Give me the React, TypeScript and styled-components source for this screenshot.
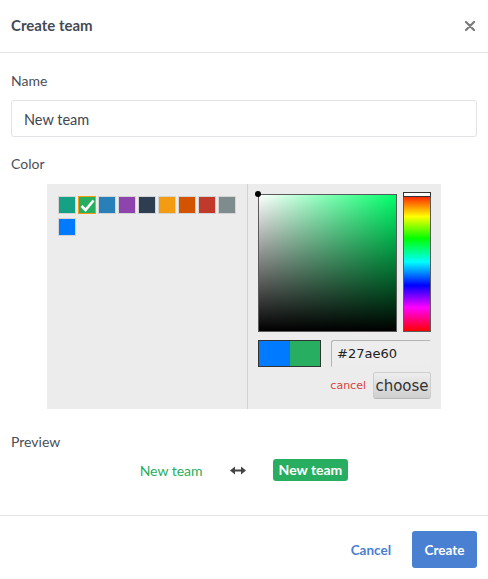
import React, { useState } from "react"
import styled, { createGlobalStyle } from "styled-components"

const GlobalStyle = createGlobalStyle`
  html, body {
    margin: 0;
    padding: 0;
    background: #fff;
  }
  body {
    font-family: Lato, "Liberation Sans", sans-serif;
    color: #4a4f57;
  }
  * {
    box-sizing: border-box;
  }
`

const Modal = styled.div`
  width: 488px;
  height: 579px;
  display: flex;
  flex-direction: column;
  background: #fff;
`

const Header = styled.div`
  height: 53px;
  padding: 0 12px 0 11px;
  display: flex;
  align-items: center;
  justify-content: space-between;
  border-bottom: 1px solid #e3e4ea;
`

const Title = styled.h1`
  margin: 0 0 2px;
  font-size: 15px;
  font-weight: 700;
  color: #444a54;
`

const CloseBtn = styled.button`
  border: none;
  background: transparent;
  padding: 0;
  width: 12px;
  height: 12px;
  display: flex;
  align-items: center;
  justify-content: center;
  cursor: pointer;
`

const Body = styled.div`
  flex: 1;
  padding: 18px 11px 0;
`

const Label = styled.div<{ $gap?: number }>`
  font-size: 14px;
  line-height: 20px;
  color: #4a4f57;
  margin-bottom: ${(p) => p.$gap ?? 9}px;
`

const Field = styled.div<{ $gap?: number }>`
  margin-bottom: ${(p) => p.$gap ?? 17}px;
`

const TextInput = styled.input`
  width: 100%;
  height: 37px;
  border: 1px solid #e1e3e8;
  border-radius: 3px;
  padding: 1px 12px 0;
  font-family: inherit;
  font-size: 14.5px;
  color: #3f4651;
  outline: none;
`

const Picker = styled.div`
  width: 394px;
  margin: 0 auto;
  display: flex;
  background: #ececec;
`

const Palette = styled.div`
  width: 201px;
  padding: 12px 10px 10px 11px;
  border-right: 1px solid #d2d2d2;
  display: flex;
  flex-wrap: wrap;
  align-content: flex-start;
  gap: 4px 2px;
`

const Swatch = styled.div<{ $color: string; $active?: boolean }>`
  width: 18px;
  height: 18px;
  background: ${(p) => p.$color};
  border: 1px solid ${(p) => (p.$active ? "#f39c12" : "#d4d4d4")};
  display: flex;
  align-items: center;
  justify-content: center;
`

const ColorArea = styled.div`
  flex: 1;
  padding: 10px;
  display: grid;
  grid-template-columns: 139px 28px;
  column-gap: 6px;
  align-content: start;
`

const SatBox = styled.div`
  position: relative;
  width: 139px;
  height: 138px;
  border: 1px solid #5a5a5a;
  background: linear-gradient(to top, #000, rgba(0, 0, 0, 0)),
    linear-gradient(to right, #fff, rgba(255, 255, 255, 0)), #00ff6a;
`

const SatDot = styled.div`
  position: absolute;
  left: -4px;
  top: -4px;
  width: 6px;
  height: 6px;
  border-radius: 50%;
  background: #000;
`

const HueBar = styled.div`
  position: relative;
  width: 28px;
  height: 140px;
  margin-top: -2px;
  border: 1px solid #5a5a5a;
  background: linear-gradient(
    to bottom,
    #ff0000 0%,
    #ffff00 17%,
    #00ff00 33%,
    #00ffff 50%,
    #0000ff 67%,
    #ff00ff 83%,
    #ff0000 100%
  );
`

const HueMarker = styled.div`
  position: absolute;
  left: -1px;
  right: -1px;
  top: -1px;
  height: 5px;
  background: #fff;
  border: 1px solid #333;
`

const ValueRow = styled.div`
  grid-column: 1 / span 2;
  display: flex;
  justify-content: space-between;
  margin-top: 8px;
`

const Compare = styled.div`
  width: 63px;
  height: 27px;
  display: flex;
  border: 1px solid #333;
`

const Half = styled.div<{ $color: string }>`
  flex: 1;
  background: ${(p) => p.$color};
`

const HexInput = styled.input`
  width: 100px;
  height: 27px;
  border: 1px solid #b4b4b4;
  border-right-color: #ececec;
  border-bottom-color: #ececec;
  border-radius: 3px 0 0 0;
  background: #ededed;
  padding: 0 5px;
  font-family: "DejaVu Sans", sans-serif;
  font-size: 13px;
  color: #222;
  outline: none;
`

const Actions = styled.div`
  grid-column: 1 / span 2;
  display: flex;
  justify-content: flex-end;
  align-items: center;
  gap: 7px;
  margin-top: 5px;
`

const CancelLink = styled.a`
  font-family: "DejaVu Sans", sans-serif;
  font-size: 11px;
  color: #d93f3f;
  cursor: pointer;
`

const ChooseBtn = styled.button`
  height: 27px;
  width: 58px;
  padding: 0;
  border: 1px solid #cdcdcd;
  border-bottom-color: #b8b8b8;
  border-radius: 3px;
  background: linear-gradient(to bottom, #eeeeee, #cfcfcf);
  font-family: "DejaVu Sans", sans-serif;
  font-size: 15px;
  color: #333;
  cursor: pointer;
`

const PreviewRow = styled.div`
  display: flex;
  justify-content: center;
  align-items: center;
  gap: 27px;
`

const PreviewText = styled.span`
  font-size: 14px;
  color: #27ae60;
`

const Badge = styled.span`
  background: #27ae60;
  color: #fff;
  font-weight: 700;
  font-size: 14px;
  line-height: 22px;
  padding: 0 6px;
  border-radius: 3px;
`

const Footer = styled.div`
  height: 64px;
  border-top: 1px solid #e3e4ea;
  display: flex;
  justify-content: flex-end;
  align-items: center;
  gap: 9px;
  padding: 4px 11px 0 0;
`

const FooterBtn = styled.button<{ $primary?: boolean }>`
  height: 37px;
  width: ${(p) => (p.$primary ? "65px" : "auto")};
  padding: 0 ${(p) => (p.$primary ? 0 : 12)}px;
  border: none;
  border-radius: 3px;
  font-family: inherit;
  font-weight: 700;
  font-size: 13.5px;
  background: ${(p) => (p.$primary ? "#4a80d1" : "transparent")};
  color: ${(p) => (p.$primary ? "#fff" : "#4a7fd0")};
  cursor: pointer;
`

const palette = [
  "#16a085",
  "#27ae60",
  "#2980b9",
  "#8e44ad",
  "#2c3e50",
  "#f39c12",
  "#d35400",
  "#c0392b",
  "#7f8c8d",
  "#007bff",
]

const App: React.FC = () => {
  const [name, setName] = useState("New team")
  const [color, setColor] = useState("#27ae60")

  return (
    <>
      <GlobalStyle />
      <Modal>
        <Header>
          <Title>Create team</Title>
          <CloseBtn aria-label="Close">
            <svg width="10" height="10" viewBox="0 0 10 10">
              <path
                d="M1 1 L9 9 M9 1 L1 9"
                stroke="#7a7a7a"
                strokeWidth="2.2"
                strokeLinecap="round"
              />
            </svg>
          </CloseBtn>
        </Header>
        <Body>
          <Field>
            <Label>Name</Label>
            <TextInput value={name} onChange={(e) => setName(e.target.value)} />
          </Field>
          <Field $gap={23}>
            <Label $gap={10}>Color</Label>
            <Picker>
              <Palette>
                {palette.map((c) => (
                  <Swatch
                    key={c}
                    $color={c}
                    $active={c === color}
                    onClick={() => setColor(c)}
                  >
                    {c === color && (
                      <svg width="15" height="13" viewBox="0 0 15 13">
                        <path
                          d="M1.5 7 L5.5 11 L13.5 1.5"
                          fill="none"
                          stroke="#fff"
                          strokeWidth="2.6"
                        />
                      </svg>
                    )}
                  </Swatch>
                ))}
              </Palette>
              <ColorArea>
                <SatBox>
                  <SatDot />
                </SatBox>
                <HueBar>
                  <HueMarker />
                </HueBar>
                <ValueRow>
                  <Compare>
                    <Half $color="#007bff" />
                    <Half $color={color} />
                  </Compare>
                  <HexInput value={color} onChange={(e) => setColor(e.target.value)} />
                </ValueRow>
                <Actions>
                  <CancelLink>cancel</CancelLink>
                  <ChooseBtn>choose</ChooseBtn>
                </Actions>
              </ColorArea>
            </Picker>
          </Field>
          <Field $gap={0}>
            <Label $gap={7}>Preview</Label>
            <PreviewRow>
              <PreviewText>{name}</PreviewText>
              <svg width="16" height="9" viewBox="0 0 16 9">
                <path d="M0 4.5 L5 0.5 L5 8.5 Z M16 4.5 L11 0.5 L11 8.5 Z" fill="#444" />
                <rect x="4" y="3.5" width="8" height="2" fill="#444" />
              </svg>
              <Badge>{name}</Badge>
            </PreviewRow>
          </Field>
        </Body>
        <Footer>
          <FooterBtn>Cancel</FooterBtn>
          <FooterBtn $primary>Create</FooterBtn>
        </Footer>
      </Modal>
    </>
  )
}

export default App
